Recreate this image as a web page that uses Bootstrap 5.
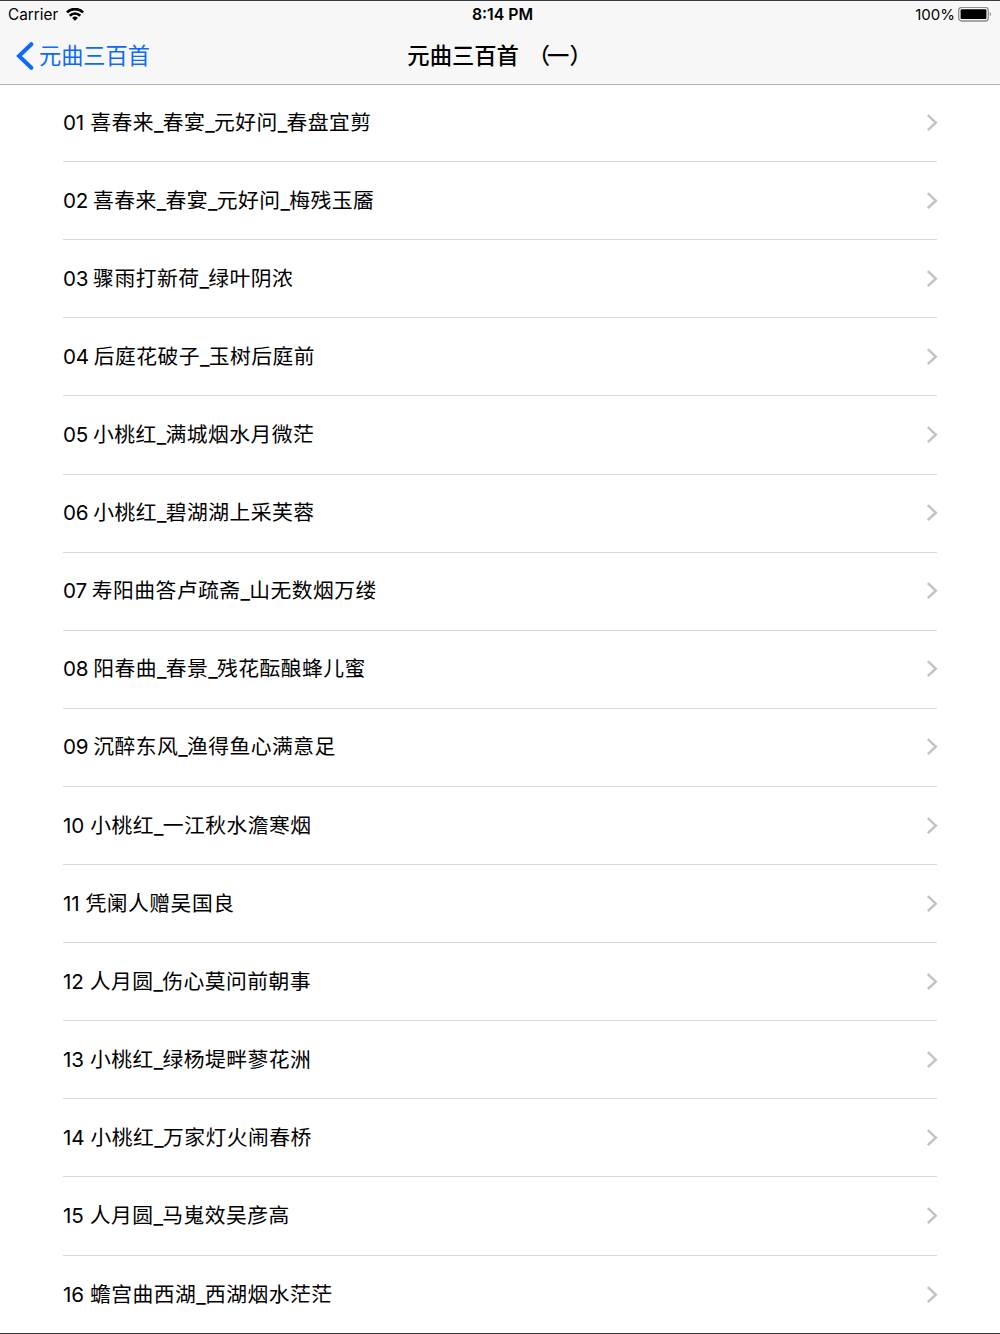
<!DOCTYPE html>
<html lang="zh-CN">
<head>
<meta charset="utf-8">
<meta name="viewport" content="width=device-width, initial-scale=1">
<title>元曲三百首 （一）</title>
<link href="https://cdn.jsdelivr.net/npm/bootstrap@5.3.0/dist/css/bootstrap.min.css" rel="stylesheet">
<style>
  body { font-family: Inter, "Noto Sans CJK SC", sans-serif; color: #000; background: #fff; }
  .screen { height: 1334px; border-top: 1px solid #3b393d; border-bottom: 1px solid #3b393d; }
  .app-header { height: 84px; background: #f7f7f7; border-bottom: 1px solid #b2b2b2; }
  .status-bar { height: 27px; padding: 1px 8px 0; font-size: 15.3px; line-height: 26px; }
  .status-time { font-weight: 600; font-size: 15.8px; padding-left: 5px; }
  .status-level { font-size: 15px; margin-right: -1px; }
  .side { flex: 1 1 0; }
  .title-bar { height: 56px; padding: 0 16px; font-size: 22.2px; line-height: 55px; }
  .back-link { color: #0b69ff; }
  .back-link span { margin-left: 5px; }
  .page-title { font-weight: 500; font-size: 22.3px; margin-left: -1px; }
  .paren-open { margin-left: 3px; letter-spacing: -3px; }
  .poems { padding: 0 62px 0 63px; margin-top: -.9px; }
  .poem { height: 78.1px; padding: 0; border: 0; border-bottom: 1px solid #d9d9db; border-radius: 0; font-size: 20.8px; line-height: 30px; letter-spacing: .47px; color: #000; background: transparent; margin-right: 1px; }
  .poem svg { margin-right: -1px; }
  .poem-no { font-size: 20.6px; letter-spacing: -.2px; margin-right: -.8px; }
  .poem-no.narrow { margin-right: .6px; }
  .poem i { font-style: normal; letter-spacing: -.8px; vertical-align: -.6px; line-height: 0; }
</style>
<script src="https://cdn.jsdelivr.net/npm/bootstrap@5.3.0/dist/js/bootstrap.bundle.min.js"></script>
</head>
<body>
<svg class="d-none" xmlns="http://www.w3.org/2000/svg">
  <symbol id="chevron" viewBox="0 0 12 18"><path d="M1.8 1.2 9.8 8.7l-8 7.5" fill="none" stroke="#c2c2c7" stroke-width="2.5"/></symbol>
</svg>
<div class="screen overflow-hidden">
  <header class="app-header">
    <div class="status-bar d-flex">
      <div class="side d-flex align-items-center">
        <span>Carrier</span>
        <svg class="ms-2" width="18" height="14" viewBox="0 0 18 14" fill="none" stroke="#000" stroke-width="2.7"><path d="M.9 4.4a11.5 11.5 0 0 1 16.2 0"/><path d="M3.8 7.7a7.3 7.3 0 0 1 10.4 0"/><path d="M9 12.8 6.1 10a4.1 4.1 0 0 1 5.8 0z" fill="#000" stroke="none"/></svg>
      </div>
      <div class="status-time">8:14 PM</div>
      <div class="side d-flex align-items-center justify-content-end">
        <span class="status-level">100%</span>
        <svg class="ms-1" width="34" height="16" viewBox="0 0 34 16"><rect x=".7" y=".4" width="29.6" height="13.6" rx="3" fill="none" stroke="#8b8b8b" stroke-width="1.3"/><rect x="2.6" y="2.3" width="25.8" height="9.8" rx="1.2"/><path d="M31.8 5q2.4 2.2 0 4.4z" fill="#8b8b8b"/></svg>
      </div>
    </div>
    <nav class="title-bar d-flex">
      <div class="side">
        <a href="#" class="back-link d-inline-flex align-items-center text-decoration-none">
          <svg width="18" height="28" viewBox="0 0 18 28"><path d="M15.3 2.2 3 14l12.3 11.8" fill="none" stroke="#0b69ff" stroke-width="4" stroke-linecap="round"/></svg>
          <span>元曲三百首</span>
        </a>
      </div>
      <div class="page-title">元曲三百首 <span class="paren-open">（</span>一）</div>
      <div class="side"></div>
    </nav>
  </header>
  <main class="poems">
    <div class="list-group list-group-flush">
      <a href="#" class="poem list-group-item d-flex align-items-center justify-content-between"><span><span class="poem-no narrow">01 </span>喜春来<i>_</i>春宴<i>_</i>元好问<i>_</i>春盘宜剪</span><svg width="12" height="18"><use href="#chevron"/></svg></a>
      <a href="#" class="poem list-group-item d-flex align-items-center justify-content-between"><span><span class="poem-no">02 </span>喜春来<i>_</i>春宴<i>_</i>元好问<i>_</i>梅残玉靥</span><svg width="12" height="18"><use href="#chevron"/></svg></a>
      <a href="#" class="poem list-group-item d-flex align-items-center justify-content-between"><span><span class="poem-no">03 </span>骤雨打新荷<i>_</i>绿叶阴浓</span><svg width="12" height="18"><use href="#chevron"/></svg></a>
      <a href="#" class="poem list-group-item d-flex align-items-center justify-content-between"><span><span class="poem-no">04 </span>后庭花破子<i>_</i>玉树后庭前</span><svg width="12" height="18"><use href="#chevron"/></svg></a>
      <a href="#" class="poem list-group-item d-flex align-items-center justify-content-between"><span><span class="poem-no">05 </span>小桃红<i>_</i>满城烟水月微茫</span><svg width="12" height="18"><use href="#chevron"/></svg></a>
      <a href="#" class="poem list-group-item d-flex align-items-center justify-content-between"><span><span class="poem-no">06 </span>小桃红<i>_</i>碧湖湖上采芙蓉</span><svg width="12" height="18"><use href="#chevron"/></svg></a>
      <a href="#" class="poem list-group-item d-flex align-items-center justify-content-between"><span><span class="poem-no">07 </span>寿阳曲答卢疏斋<i>_</i>山无数烟万缕</span><svg width="12" height="18"><use href="#chevron"/></svg></a>
      <a href="#" class="poem list-group-item d-flex align-items-center justify-content-between"><span><span class="poem-no">08 </span>阳春曲<i>_</i>春景<i>_</i>残花酝酿蜂儿蜜</span><svg width="12" height="18"><use href="#chevron"/></svg></a>
      <a href="#" class="poem list-group-item d-flex align-items-center justify-content-between"><span><span class="poem-no">09 </span>沉醉东风<i>_</i>渔得鱼心满意足</span><svg width="12" height="18"><use href="#chevron"/></svg></a>
      <a href="#" class="poem list-group-item d-flex align-items-center justify-content-between"><span><span class="poem-no narrow">10 </span>小桃红<i>_</i>一江秋水澹寒烟</span><svg width="12" height="18"><use href="#chevron"/></svg></a>
      <a href="#" class="poem list-group-item d-flex align-items-center justify-content-between"><span><span class="poem-no narrow">11 </span>凭阑人赠吴国良</span><svg width="12" height="18"><use href="#chevron"/></svg></a>
      <a href="#" class="poem list-group-item d-flex align-items-center justify-content-between"><span><span class="poem-no narrow">12 </span>人月圆<i>_</i>伤心莫问前朝事</span><svg width="12" height="18"><use href="#chevron"/></svg></a>
      <a href="#" class="poem list-group-item d-flex align-items-center justify-content-between"><span><span class="poem-no narrow">13 </span>小桃红<i>_</i>绿杨堤畔蓼花洲</span><svg width="12" height="18"><use href="#chevron"/></svg></a>
      <a href="#" class="poem list-group-item d-flex align-items-center justify-content-between"><span><span class="poem-no narrow">14 </span>小桃红<i>_</i>万家灯火闹春桥</span><svg width="12" height="18"><use href="#chevron"/></svg></a>
      <a href="#" class="poem list-group-item d-flex align-items-center justify-content-between"><span><span class="poem-no narrow">15 </span>人月圆<i>_</i>马嵬效吴彦高</span><svg width="12" height="18"><use href="#chevron"/></svg></a>
      <a href="#" class="poem list-group-item d-flex align-items-center justify-content-between"><span><span class="poem-no narrow">16 </span>蟾宫曲西湖<i>_</i>西湖烟水茫茫</span><svg width="12" height="18"><use href="#chevron"/></svg></a>
    </div>
  </main>
</div>
</body>
</html>
